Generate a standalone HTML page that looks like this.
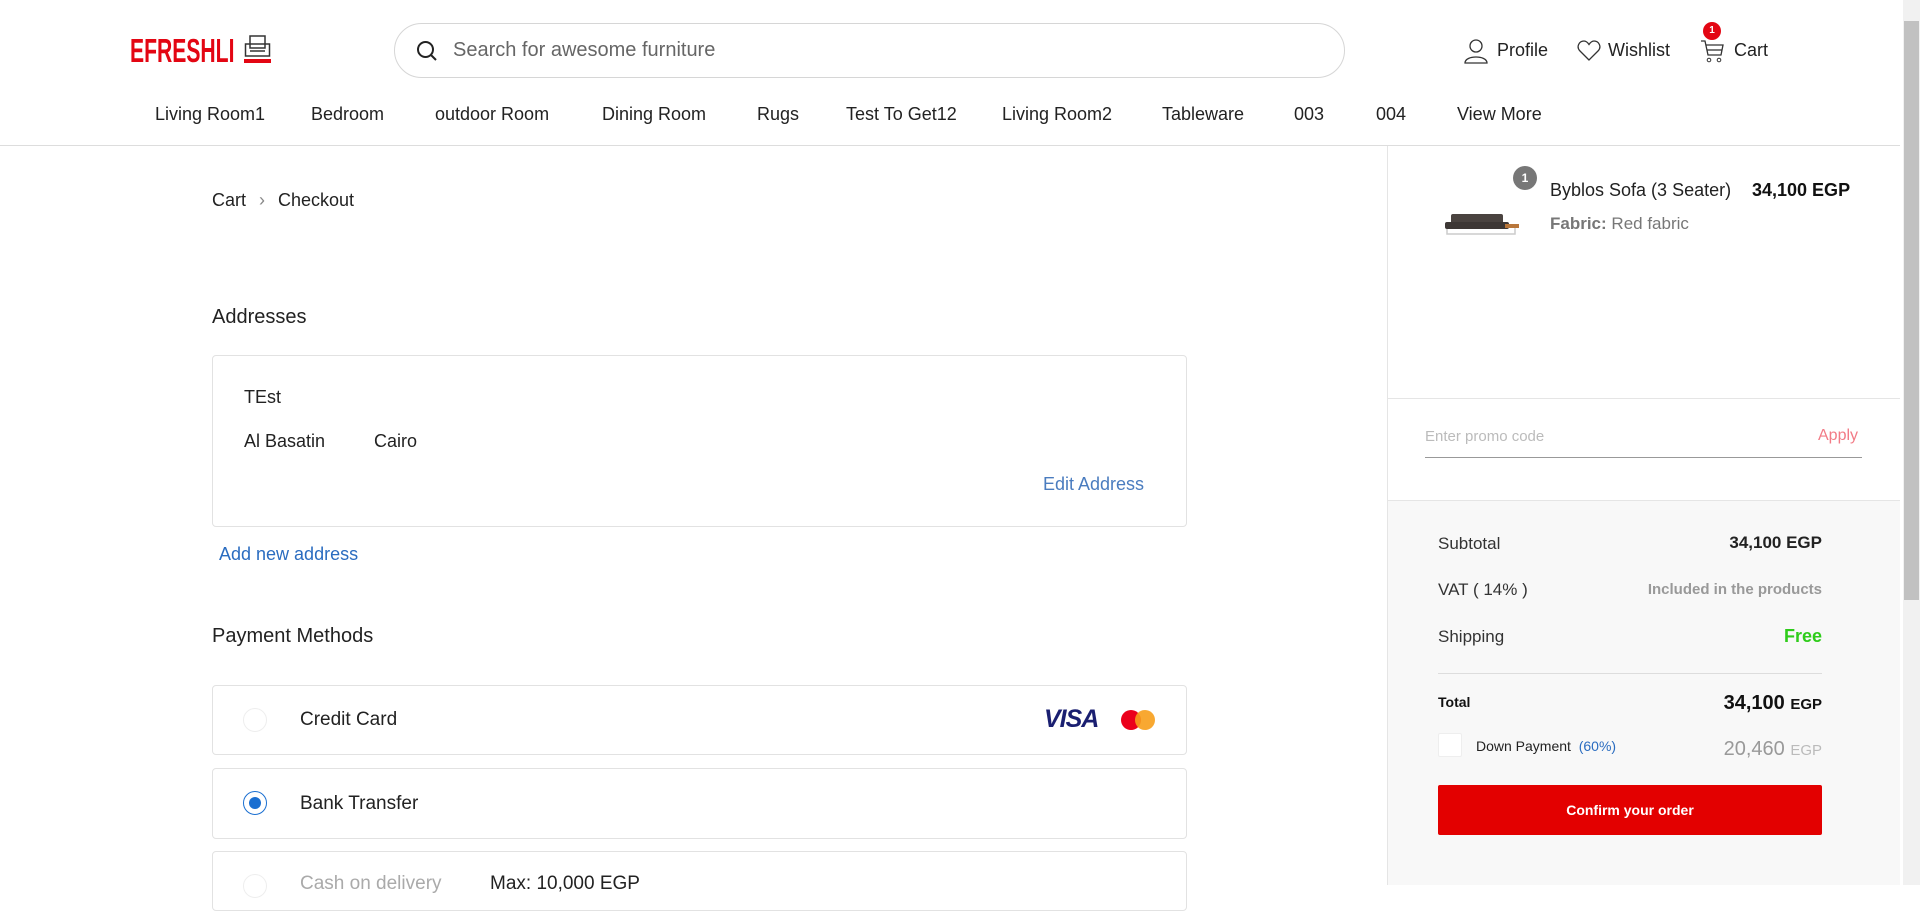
<!DOCTYPE html>
<html><head><meta charset="utf-8"><style>
*{box-sizing:border-box;margin:0;padding:0}
body{width:1920px;height:885px;overflow:hidden;font-family:"Liberation Sans",sans-serif;color:#222;background:#fff;position:relative}
.a{position:absolute;white-space:nowrap}
.nav span{position:absolute;top:104px;font-size:18px;color:#222}
.box{position:absolute;left:212px;width:975px;border:1px solid #e2e2e2;border-radius:4px;background:#fff}
.radio{position:absolute;left:243px;width:24px;height:24px;border-radius:50%;border:1px solid #eee}
</style></head><body>
<!-- header -->
<div class="a" style="left:130px;top:33px;font-size:33px;line-height:36px;font-weight:bold;color:#e30613;transform:scaleX(.64);transform-origin:left">EFRESHLI</div>
<svg class="a" style="left:244px;top:35px" width="27" height="30" viewBox="0 0 27 30"><rect x="6" y="1" width="15" height="12" fill="none" stroke="#333" stroke-width="1.5"/><rect x="1.5" y="9" width="24" height="12" fill="none" stroke="#333" stroke-width="1.5"/><line x1="6" y1="16" x2="21" y2="16" stroke="#333" stroke-width="1.5"/><rect x="0" y="24" width="27" height="4" fill="#e30613"/></svg>
<div class="a" style="left:394px;top:23px;width:951px;height:55px;border:1px solid #d6d6d6;border-radius:28px"></div>
<svg class="a" style="left:416px;top:40px" width="22" height="22" viewBox="0 0 22 22"><circle cx="9.5" cy="9.5" r="7.5" fill="none" stroke="#222" stroke-width="2"/><line x1="15" y1="15" x2="20" y2="20" stroke="#222" stroke-width="2"/></svg>
<div class="a" style="left:453px;top:39px;font-size:20px;color:#666">Search for awesome furniture</div>
<svg class="a" style="left:1464px;top:38px" width="24" height="26" viewBox="0 0 24 26"><circle cx="12" cy="8" r="6" fill="none" stroke="#333" stroke-width="1.3"/><path d="M1 25 C1 17 23 17 23 25 Z" fill="none" stroke="#333" stroke-width="1.3"/></svg>
<div class="a" style="left:1497px;top:40px;font-size:18px">Profile</div>
<svg class="a" style="left:1577px;top:40px" width="24" height="22" viewBox="0 0 24 22"><path d="M12 20 L3 11 C-1 7 2 1 7 1 C9.5 1 11 3 12 4.5 C13 3 14.5 1 17 1 C22 1 25 7 21 11 Z" fill="none" stroke="#333" stroke-width="1.3"/></svg>
<div class="a" style="left:1608px;top:40px;font-size:18px">Wishlist</div>
<svg class="a" style="left:1700px;top:38px" width="24" height="26" viewBox="0 0 24 26"><path d="M1 3 H5 L8 17 H21 L23 7 H6" fill="none" stroke="#333" stroke-width="1.3"/><line x1="7" y1="12" x2="22" y2="12" stroke="#333" stroke-width="1.3"/><circle cx="9" cy="22" r="1.8" fill="none" stroke="#333"/><circle cx="19" cy="22" r="1.8" fill="none" stroke="#333"/></svg>
<div class="a" style="left:1703px;top:22px;width:18px;height:18px;border-radius:50%;background:#e30613;color:#fff;font-size:10px;font-weight:bold;text-align:center;line-height:18px">1</div>
<div class="a" style="left:1734px;top:40px;font-size:18px">Cart</div>
<div class="nav">
<span style="left:155px">Living Room1</span><span style="left:311px">Bedroom</span><span style="left:435px">outdoor Room</span><span style="left:602px">Dining Room</span><span style="left:757px">Rugs</span><span style="left:846px">Test To Get12</span><span style="left:1002px">Living Room2</span><span style="left:1162px">Tableware</span><span style="left:1294px">003</span><span style="left:1376px">004</span><span style="left:1457px">View More</span>
</div>
<div class="a" style="left:0;top:145px;width:1900px;height:1px;background:#ddd"></div>
<!-- right panel -->
<div class="a" style="left:1387px;top:146px;width:513px;height:739px;border-left:1px solid #e5e5e5;background:#fff"></div>
<div class="a" style="left:1387px;top:398px;width:513px;height:1px;background:#e5e5e5"></div>
<div class="a" style="left:1388px;top:500px;width:512px;height:385px;background:#f8f8f8;border-top:1px solid #e5e5e5"></div>
<svg class="a" style="left:1443px;top:210px" width="80" height="32" viewBox="0 0 80 32"><rect x="8" y="4" width="52" height="10" rx="2" fill="#4a4340"/><rect x="2" y="12" width="64" height="7" rx="2" fill="#3d3735"/><rect x="62" y="14" width="14" height="4" fill="#b8763a"/><path d="M4 19 V24 H72 V18" fill="none" stroke="#ccc" stroke-width="1.5"/></svg>
<div class="a" style="left:1513px;top:166px;width:24px;height:24px;border-radius:50%;background:#777;color:#fff;font-size:12px;font-weight:bold;text-align:center;line-height:24px">1</div>
<div class="a" style="left:1550px;top:180px;font-size:18px;color:#222">Byblos Sofa (3 Seater)</div>
<div class="a" style="left:1752px;top:180px;font-size:18px;font-weight:bold;color:#111">34,100 EGP</div>
<div class="a" style="left:1550px;top:214px;font-size:17px;color:#777"><b>Fabric:</b> Red fabric</div>
<div class="a" style="left:1425px;top:428px;font-size:15px;color:#bbb">Enter promo code</div>
<div class="a" style="left:1818px;top:427px;font-size:16px;color:#f27b86">Apply</div>
<div class="a" style="left:1425px;top:457px;width:437px;height:1px;background:#999"></div>
<div class="a" style="left:1438px;top:534px;font-size:17px;color:#333">Subtotal</div>
<div class="a" style="left:1722px;top:533px;width:100px;text-align:right;font-size:17px;font-weight:bold;color:#222">34,100 EGP</div>
<div class="a" style="left:1438px;top:580px;font-size:17px;color:#333">VAT ( 14% )</div>
<div class="a" style="left:1622px;top:581px;width:200px;text-align:right;font-size:15px;font-weight:bold;color:#999">Included in the products</div>
<div class="a" style="left:1438px;top:627px;font-size:17px;color:#333">Shipping</div>
<div class="a" style="left:1722px;top:626px;width:100px;text-align:right;font-size:18px;font-weight:bold;color:#2ecc1a">Free</div>
<div class="a" style="left:1438px;top:673px;width:384px;height:1px;background:#ddd"></div>
<div class="a" style="left:1438px;top:694px;font-size:14px;font-weight:bold;color:#111">Total</div>
<div class="a" style="left:1680px;top:692px;width:142px;text-align:right;font-size:20px;font-weight:bold;color:#111">34,100 <span style="font-size:15px">EGP</span></div>
<div class="a" style="left:1438px;top:733px;width:24px;height:24px;border:1px solid #eee;background:#fff;border-radius:2px"></div>
<div class="a" style="left:1476px;top:738px;font-size:14px;color:#222">Down Payment&nbsp; <span style="color:#2a6cc0">(60%)</span></div>
<div class="a" style="left:1680px;top:738px;width:142px;text-align:right;font-size:20px;color:#999">20,460 <span style="font-size:15px;color:#bbb">EGP</span></div>
<div class="a" style="left:1438px;top:785px;width:384px;height:50px;background:#e30000;border-radius:2px;color:#fff;font-size:14px;font-weight:bold;text-align:center;line-height:50px">Confirm your order</div>
<!-- scrollbar -->
<div class="a" style="left:1903px;top:0;width:17px;height:885px;background:#f1f1f1"></div>
<div class="a" style="left:1904px;top:21px;width:15px;height:579px;background:#c1c1c1"></div>
<!-- main -->
<div class="a" style="left:212px;top:190px;font-size:18px;color:#222">Cart <span style="color:#888;margin:0 8px">›</span> Checkout</div>
<div class="a" style="left:212px;top:306px;font-size:20px;color:#222">Addresses</div>
<div class="box" style="top:355px;height:172px"></div>
<div class="a" style="left:244px;top:387px;font-size:18px">TEst</div>
<div class="a" style="left:244px;top:431px;font-size:18px">Al Basatin</div>
<div class="a" style="left:374px;top:431px;font-size:18px">Cairo</div>
<div class="a" style="left:1043px;top:474px;font-size:18px;color:#4a7cbf">Edit Address</div>
<div class="a" style="left:219px;top:544px;font-size:18px;color:#2a6cc0">Add new address</div>
<div class="a" style="left:212px;top:625px;font-size:20px;color:#222">Payment Methods</div>
<div class="box" style="top:685px;height:70px"></div>
<div class="radio" style="top:708px"></div>
<div class="a" style="left:300px;top:709px;font-size:19px">Credit Card</div>
<div class="a" style="left:1044px;top:705px;font-size:25px;font-weight:bold;font-style:italic;color:#1a1f71;letter-spacing:-1px">VISA</div>
<svg class="a" style="left:1120px;top:708px" width="36" height="24"><circle cx="11" cy="12" r="10" fill="#eb001b"/><circle cx="25" cy="12" r="10" fill="#f79e1b" opacity=".9"/></svg>
<div class="box" style="top:768px;height:71px"></div>
<div class="radio" style="top:791px;border:1.5px solid #1a6fd1"></div>
<div class="a" style="left:249px;top:797px;width:12px;height:12px;border-radius:50%;background:#1a6fd1"></div>
<div class="a" style="left:300px;top:793px;font-size:19px">Bank Transfer</div>
<div class="box" style="top:851px;height:60px"></div>
<div class="radio" style="top:874px"></div>
<div class="a" style="left:300px;top:873px;font-size:19px;color:#aaa">Cash on delivery</div>
<div class="a" style="left:490px;top:873px;font-size:19px;color:#222">Max: 10,000 EGP</div>
</body></html>
